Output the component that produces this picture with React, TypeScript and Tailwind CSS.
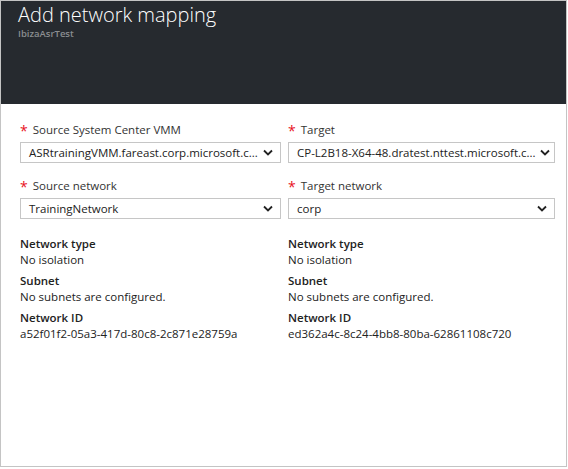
import React from 'react';

const font = { fontFamily: '"Segoe UI", "Open Sans", "Noto Sans", sans-serif' };

function Chevron() {
  return (
    <svg width="10" height="7" viewBox="0 0 10 7" className="shrink-0">
      <path d="M1 1.5 L5 5.5 L9 1.5" fill="none" stroke="#222" strokeWidth="1.8" />
    </svg>
  );
}

function Field({ label, value }: { label: string; value: string }) {
  return (
    <div className="mb-[14px]">
      <div className="flex items-center gap-[5px] text-[11.5px] leading-[16px] text-[#333] mb-[4px]">
        <span className="text-[#e81123] text-[14px] leading-[14px] pt-[3px]">*</span>
        <span>{label}</span>
      </div>
      <div className="h-[21px] border border-[#c6c6c6] flex items-center justify-between pl-[8px] pr-[7px] text-[11.5px] text-[#222]">
        <span className="whitespace-nowrap pr-[4px]">{value}</span>
        <Chevron />
      </div>
    </div>
  );
}

function Info({ title, value }: { title: string; value: string }) {
  return (
    <div className="mb-[5px] text-[11.5px] leading-[16px] text-[#222]">
      <div className="font-semibold">{title}</div>
      <div>{value}</div>
    </div>
  );
}

function Column({
  label1,
  value1,
  label2,
  value2,
  id,
}: {
  label1: string;
  value1: string;
  label2: string;
  value2: string;
  id: string;
}) {
  return (
    <div>
      <Field label={label1} value={value1} />
      <Field label={label2} value={value2} />
      <div className="pt-[3px]">
        <Info title="Network type" value="No isolation" />
        <Info title="Subnet" value="No subnets are configured." />
        <Info title="Network ID" value={id} />
      </div>
    </div>
  );
}

export default function App() {
  return (
    <div className="w-[568px] h-[469px] bg-white" style={font}>
      <div className="w-[567px] h-[467px] border border-[#c4c4c4] flex flex-col">
        <div className="h-[103px] bg-[#262a2f] px-[17px] pt-[1px] shrink-0">
          <h1 className="text-white text-[20px] leading-[26px] font-light">Add network mapping</h1>
          <p className="text-[#8a8d90] text-[9.5px] font-semibold leading-[12px]">IbizaAsrTest</p>
        </div>
        <div className="grid grid-cols-[261px_267px] gap-x-[7px] pl-[19px] pt-[17px]">
          <Column
            label1="Source System Center VMM"
            value1="ASRtrainingVMM.fareast.corp.microsoft.c..."
            label2="Source network"
            value2="TrainingNetwork"
            id="a52f01f2-05a3-417d-80c8-2c871e28759a"
          />
          <Column
            label1="Target"
            value1="CP-L2B18-X64-48.dratest.nttest.microsoft.c..."
            label2="Target network"
            value2="corp"
            id="ed362a4c-8c24-4bb8-80ba-62861108c720"
          />
        </div>
      </div>
    </div>
  );
}
